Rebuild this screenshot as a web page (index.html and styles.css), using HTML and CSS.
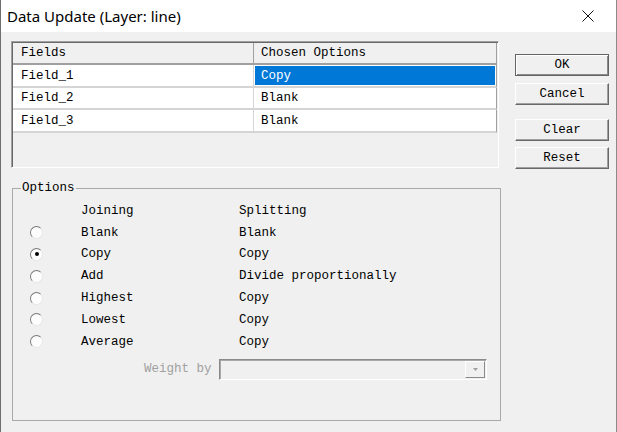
FILE: index.html
```html
<!DOCTYPE html>
<html>
<head>
<meta charset="utf-8">
<link rel="stylesheet" href="styles.css">
</head>
<body>
<div class="window">
  <div class="titlebar">
    <span class="title">Data Update (Layer: line)</span>
    <span class="close">
      <svg width="12" height="12" viewBox="0 0 12 12"><path d="M0.5 0.5 L11.5 11.5 M11.5 0.5 L0.5 11.5" stroke="#111" stroke-width="1" fill="none"/></svg>
    </span>
  </div>
  <div class="body">
    <div class="top">
      <div class="grid">
        <div class="grid-inner">
          <div class="cell head">Fields</div>
          <div class="cell head last">Chosen Options</div>
          <div class="cell">Field_1</div>
          <div class="cell last sel-wrap"><span class="sel">Copy</span></div>
          <div class="cell">Field_2</div>
          <div class="cell last">Blank</div>
          <div class="cell">Field_3</div>
          <div class="cell last">Blank</div>
        </div>
      </div>
      <div class="buttons">
        <div class="btn default">OK</div>
        <div class="btn">Cancel</div>
        <div class="btn gap">Clear</div>
        <div class="btn last-btn">Reset</div>
      </div>
    </div>
    <fieldset class="options">
      <legend>Options</legend>
      <div class="opt-grid">
        <span></span><span>Joining</span><span>Splitting</span>
        <span class="radio"></span><span>Blank</span><span>Blank</span>
        <span class="radio checked"></span><span>Copy</span><span>Copy</span>
        <span class="radio"></span><span>Add</span><span>Divide proportionally</span>
        <span class="radio"></span><span>Highest</span><span>Copy</span>
        <span class="radio"></span><span>Lowest</span><span>Copy</span>
        <span class="radio"></span><span>Average</span><span>Copy</span>
      </div>
      <div class="weight">
        <span class="weight-label">Weight by</span>
        <div class="combo">
          <div class="combo-btn">
            <svg width="5" height="3" viewBox="0 0 5 3"><path d="M0 0 H5 L2.5 3 Z" fill="#a0a0a0"/></svg>
          </div>
        </div>
      </div>
    </fieldset>
  </div>
</div>
</body>
</html>
```

FILE: styles.css
```css
html, body {
  margin: 0;
  padding: 0;
  background: #ffffff;
}

.window {
  width: 617px;
  height: 432px;
  box-sizing: border-box;
  border-left: 1px solid #6f6f6f;
  border-right: 1px solid #8a8a8a;
  background: #f0f0f0;
  font-family: "Liberation Mono", monospace;
  font-size: 12.5px;
  color: #000;
  display: flex;
  flex-direction: column;
}

.titlebar {
  height: 32px;
  flex: none;
  background: #ffffff;
  display: flex;
  align-items: center;
  justify-content: space-between;
  padding-left: 6px;
}

.title {
  font-family: "Noto Sans", sans-serif;
  font-size: 15px;
  color: #000;
}

.close {
  width: 46px;
  height: 32px;
  margin-right: 5px;
  display: flex;
  align-items: center;
  justify-content: center;
}

.body {
  padding: 9px 0 0 10px;
}

.top {
  display: flex;
  align-items: flex-start;
}

.grid {
  width: 488px;
  height: 127px;
  box-sizing: border-box;
  border: 1px solid;
  border-color: #a0a0a0 #ffffff #ffffff #a0a0a0;
  box-shadow: inset 1px 1px 0 #696969;
  padding: 1px 0 0 1px;
}

.grid-inner {
  display: grid;
  grid-template-columns: 241px 243px;
  grid-template-rows: 22px 23px 22px 23px;
}

.cell {
  box-sizing: border-box;
  background: #ffffff;
  border-bottom: 2px solid #d5d5d5;
  border-right: 1px solid #d5d5d5;
  padding-left: 8px;
  display: flex;
  align-items: center;
  white-space: nowrap;
}

.cell.last {
  border-right: 1px solid #a0a0a0;
  padding-left: 7px;
}

.cell.head {
  background: #f0f0f0;
  border-bottom: 2px solid #a0a0a0;
  border-right: 1px solid #a0a0a0;
}

.cell.last.sel-wrap {
  padding: 1px 1px 1px 1px;
}

.sel {
  flex: 1;
  align-self: stretch;
  background: #0078d7;
  color: #ffffff;
  display: flex;
  align-items: center;
  padding-left: 6px;
}

.buttons {
  margin-left: 16px;
  margin-top: 13px;
  display: flex;
  flex-direction: column;
  gap: 7px;
}

.btn {
  width: 94px;
  height: 22px;
  box-sizing: border-box;
  border: 1px solid;
  border-color: #ffffff #696969 #696969 #ffffff;
  box-shadow: inset -1px -1px 0 #a0a0a0;
  background: #f0f0f0;
  display: flex;
  align-items: center;
  justify-content: center;
}

.btn.default {
  border: 1px solid #646464;
  box-shadow: inset 1px 1px 0 #ffffff, inset -1px -1px 0 #8a8a8a;
}

.btn.gap {
  margin-top: 7px;
}

.btn.last-btn {
  margin-top: -1px;
}

.options {
  margin: 12px 0 0 1px;
  width: 489px;
  height: 240px;
  box-sizing: border-box;
  border: 1px solid #a9a9a9;
  padding: 4px 0 0 0;
  min-inline-size: 0;
}

.options legend {
  margin-left: 8px;
  padding: 0 1px;
  line-height: 15px;
}

.opt-grid {
  display: grid;
  grid-template-columns: 51px 158px auto;
  grid-auto-rows: 21.8px;
  align-items: center;
  padding-left: 17px;
}

.radio {
  width: 13px;
  height: 13px;
  box-sizing: border-box;
  border-radius: 50%;
  border: 1px solid;
  border-color: #7a7a7a #e6e6e6 #e6e6e6 #7a7a7a;
  background: #fdfdfd;
  position: relative;
}

.radio.checked::after {
  content: "";
  position: absolute;
  left: 3.5px;
  top: 3.5px;
  width: 4px;
  height: 4px;
  border-radius: 50%;
  background: #000;
}

.weight {
  display: flex;
  align-items: center;
  padding-left: 131px;
  margin-top: 6px;
}

.weight-label {
  color: #a0a0a0;
  width: 68px;
}

.combo {
  margin-left: 7px;
  width: 268px;
  height: 21px;
  box-sizing: border-box;
  border: 1px solid;
  border-color: #8a8a8a #ffffff #ffffff #8a8a8a;
  box-shadow: inset 1px 1px 0 #a8a8a8;
  background: #f0f0f0;
  display: flex;
  justify-content: flex-end;
  padding: 1px 1px 1px 0;
}

.combo-btn {
  width: 20px;
  box-sizing: border-box;
  border: 1px solid;
  border-color: #ffffff #8a8a8a #8a8a8a #ffffff;
  background: #f0f0f0;
  display: flex;
  align-items: center;
  justify-content: center;
}
```
